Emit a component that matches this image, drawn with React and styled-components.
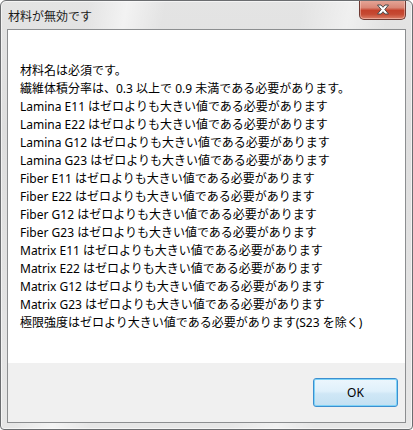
import React from 'react';
import styled, { createGlobalStyle } from 'styled-components';

const GlobalStyle = createGlobalStyle`
  html, body {
    margin: 0;
    padding: 0;
    background: #ffffff;
  }
  body {
    font-family: "Noto Sans", "Noto Sans CJK JP", sans-serif;
  }
`;

const messages = [
  '材料名は必須です。',
  '繊維体積分率は、0.3 以上で 0.9 未満である必要があります。',
  'Lamina E11 はゼロよりも大きい値である必要があります',
  'Lamina E22 はゼロよりも大きい値である必要があります',
  'Lamina G12 はゼロよりも大きい値である必要があります',
  'Lamina G23 はゼロよりも大きい値である必要があります',
  'Fiber E11 はゼロよりも大きい値である必要があります',
  'Fiber E22 はゼロよりも大きい値である必要があります',
  'Fiber G12 はゼロよりも大きい値である必要があります',
  'Fiber G23 はゼロよりも大きい値である必要があります',
  'Matrix E11 はゼロよりも大きい値である必要があります',
  'Matrix E22 はゼロよりも大きい値である必要があります',
  'Matrix G12 はゼロよりも大きい値である必要があります',
  'Matrix G23 はゼロよりも大きい値である必要があります',
  '極限強度はゼロより大きい値である必要があります(S23 を除く)',
];

const App = () => {
  return (
    <>
      <GlobalStyle />
      <Window>
        <TitleBar>
          <Title>材料が無効です</Title>
          <CloseButton aria-label="閉じる">
            <svg width="14" height="11" viewBox="0 0 14 11">
              <path
                d="M1.5 1 L5 1 L7 3.3 L9 1 L12.5 1 L8.8 5.5 L12.5 10 L9 10 L7 7.7 L5 10 L1.5 10 L5.2 5.5 Z"
                fill="#ffffff"
                stroke="#4a4a4a"
                strokeWidth="1"
                strokeLinejoin="round"
              />
            </svg>
          </CloseButton>
        </TitleBar>
        <Client>
          <MessagePanel>
            {messages.map(msg => (
              <Line key={msg}>{msg}</Line>
            ))}
          </MessagePanel>
          <Footer>
            <OkButton>OK</OkButton>
          </Footer>
        </Client>
      </Window>
    </>
  );
};

const Window = styled.div`
  width: 413px;
  height: 430px;
  box-sizing: border-box;
  border: 1px solid #6b6d70;
  border-radius: 6px 6px 4px 4px;
  background:
    linear-gradient(100deg, rgba(255, 255, 255, 0) 18%, rgba(255, 255, 255, 0.55) 26%, rgba(255, 255, 255, 0) 34%),
    linear-gradient(100deg, rgba(255, 255, 255, 0) 62%, rgba(255, 255, 255, 0.45) 72%, rgba(255, 255, 255, 0) 80%),
    linear-gradient(180deg, #e4e4e4 0%, #dedede 30%, #e6e6e6 100%);
  box-shadow: inset 0 0 0 1px rgba(255, 255, 255, 0.6);
  display: flex;
  flex-direction: column;
  overflow: hidden;
`;

const TitleBar = styled.div`
  height: 28px;
  display: flex;
  justify-content: space-between;
  align-items: flex-start;
  padding: 0 6px 0 7px;
`;

const Title = styled.div`
  font-family: "Noto Sans CJK JP", sans-serif;
  font-size: 12px;
  line-height: 14px;
  color: #1a1a1a;
  margin-top: 8px;
`;

const CloseButton = styled.div`
  width: 47px;
  height: 20px;
  margin-top: -1px;
  box-sizing: border-box;
  border: 1px solid #6e3a33;
  border-top: none;
  border-radius: 0 0 5px 5px;
  background: linear-gradient(180deg, #e6a89a 0%, #d98776 40%, #c4412b 55%, #c54a33 75%, #dc7f68 100%);
  box-shadow: inset 0 0 0 1px rgba(255, 220, 210, 0.45);
  display: flex;
  align-items: center;
  justify-content: center;
  padding-bottom: 1px;
`;

const Client = styled.div`
  flex: 1;
  margin: 0 6px 6px 6px;
  border: 1px solid #8c8e90;
  display: flex;
  flex-direction: column;
  min-height: 0;
`;

const MessagePanel = styled.div`
  flex: 1;
  background: #ffffff;
  padding: 32px 12px 0 12px;
`;

const Line = styled.div`
  font-size: 12px;
  line-height: 18px;
  color: #000000;
  white-space: nowrap;
`;

const Footer = styled.div`
  height: 59px;
  flex-shrink: 0;
  background: #f0f0f0;
  display: flex;
  justify-content: flex-end;
  align-items: flex-start;
  padding: 15px 7px 0 0;
  box-sizing: border-box;
`;

const OkButton = styled.div`
  width: 85px;
  height: 29px;
  box-sizing: border-box;
  border: 1px solid #3c8fd0;
  border-radius: 3px;
  background: linear-gradient(180deg, #ecf6fd 0%, #dff0fb 45%, #cfe7f6 55%, #c3e0f2 100%);
  box-shadow: inset 0 0 0 1px #7fd3f7;
  font-size: 12px;
  color: #000000;
  display: flex;
  align-items: center;
  justify-content: center;
`;

export default App;
